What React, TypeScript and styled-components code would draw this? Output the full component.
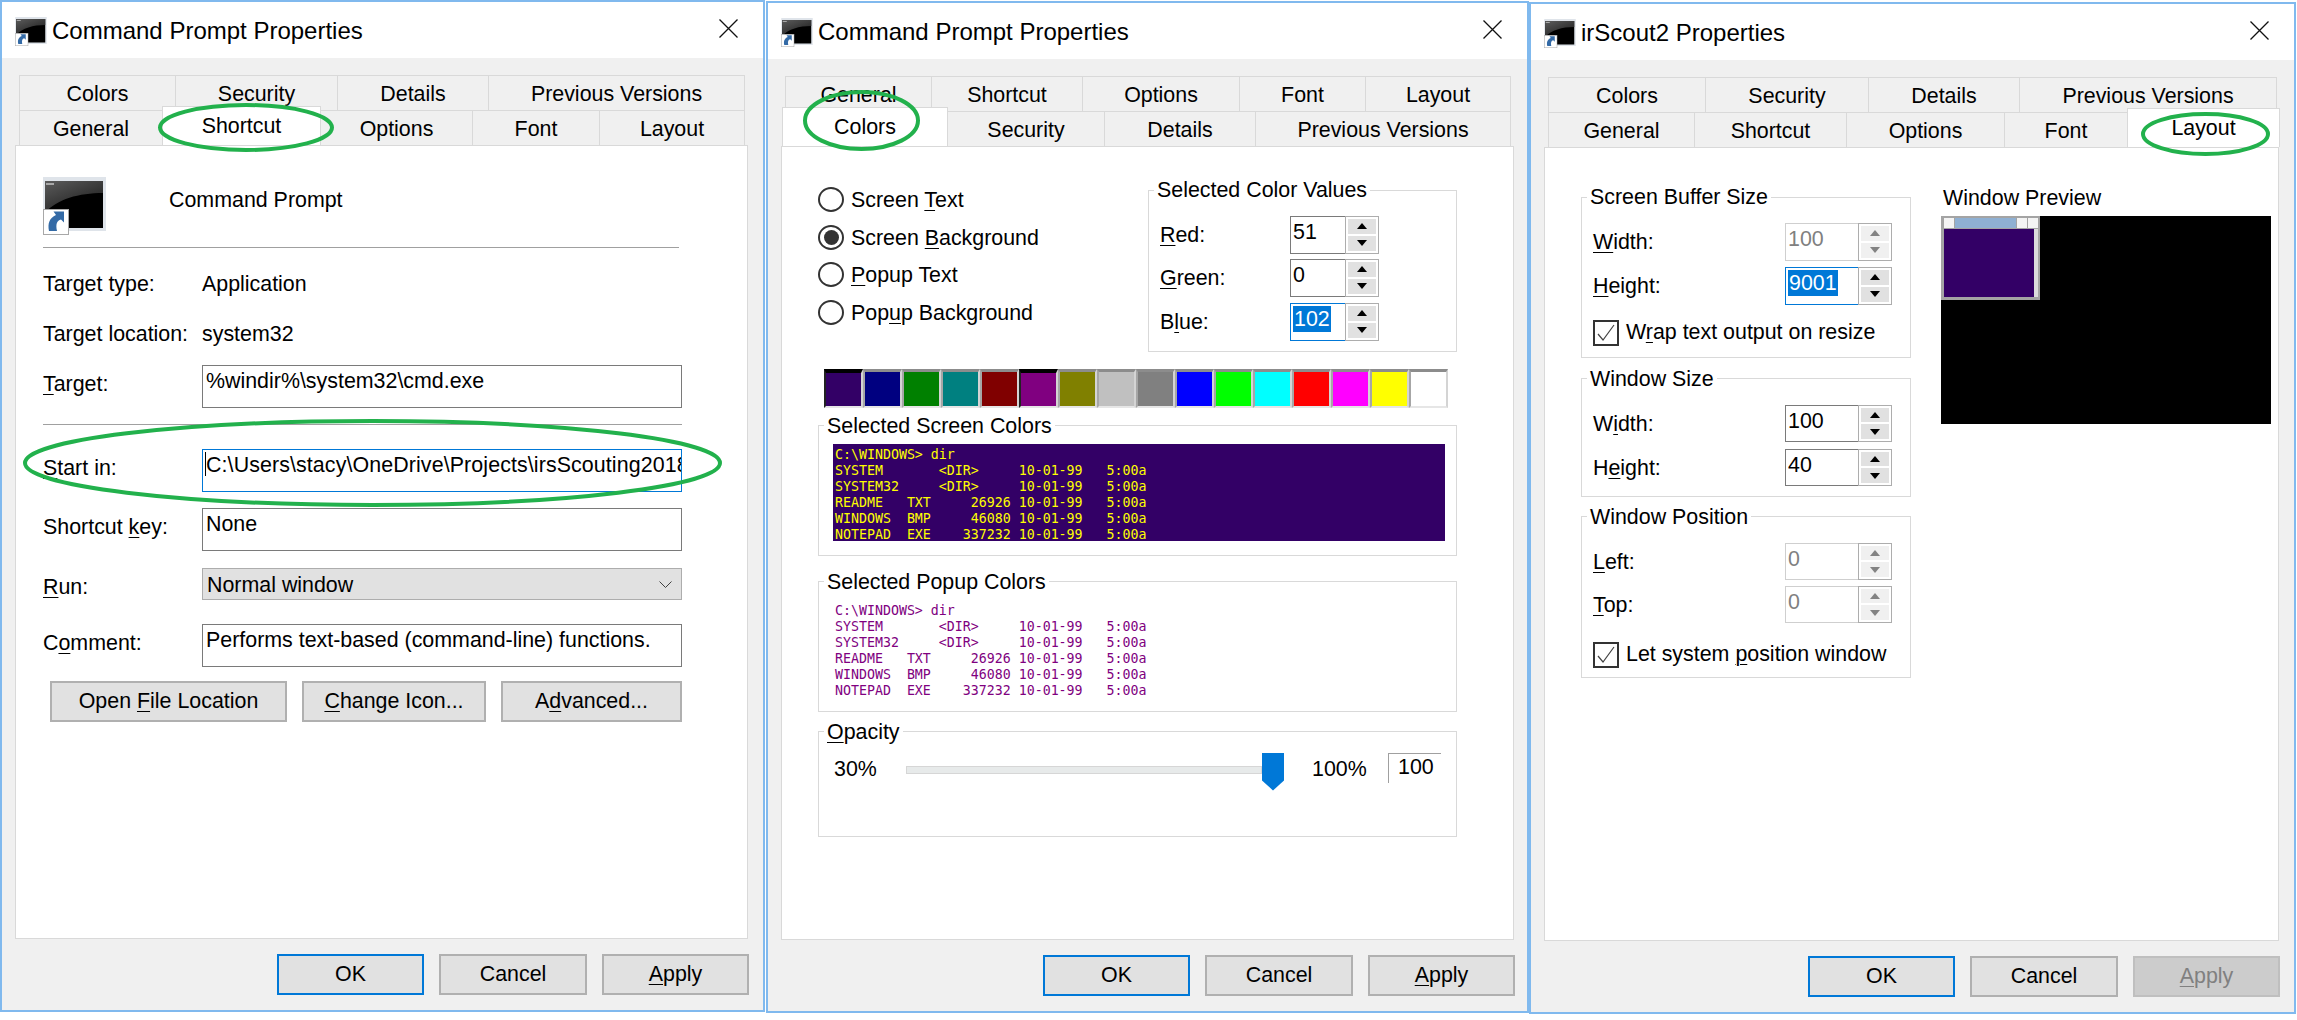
import React from "react";
import styled, { createGlobalStyle } from "styled-components";

const Global = createGlobalStyle`
  html, body { margin: 0; padding: 0; background: #fff; overflow: hidden; }
  body { font-family: "Liberation Sans", Arial, sans-serif; font-size: 21.4px; color: #000; }
  * { box-sizing: border-box; }
`;

const Desktop = styled.div`
  display: flex;
  align-items: flex-start;
  width: 2297px;
  height: 1020px;
  overflow: hidden;
`;
const Win = styled.section<{ $w: number; $top: number; $gap: number }>`
  position: relative;
  display: flex;
  flex-direction: column;
  flex: none;
  width: ${(p) => p.$w}px;
  height: 1012px;
  margin-top: ${(p) => p.$top}px;
  margin-right: ${(p) => p.$gap}px;
  border: 2px solid #80b9ee;
  background: #f0f0f0;
`;
const TitleBar = styled.header`
  display: flex;
  align-items: center;
  height: 56px;
  padding: 2px 25px 0 13px;
  background: #fff;
  flex: none;
`;
const TitleText = styled.h1`
  margin: 0 0 0 5px;
  font-size: 24px;
  font-weight: 400;
  flex: 1;
`;
const Close = styled.svg`
  width: 19px;
  height: 19px;
  margin-top: -5px;
`;
const Body = styled.div`
  display: flex;
  flex-direction: column;
  padding: 17px 0 0 13px;
  flex: 1;
`;
const TabRow = styled.div<{ $shift?: number }>`
  display: flex;
  height: 35px;
  margin-left: ${(p) => 4 + (p.$shift ?? 0)}px;
`;
const Tab = styled.div<{ $w: number; $active?: boolean }>`
  display: flex;
  align-items: center;
  justify-content: center;
  flex: none;
  width: ${(p) => p.$w}px;
  height: ${(p) => (p.$active ? 39 : 35)}px;
  margin-top: ${(p) => (p.$active ? -4 : 0)}px;
  padding-top: ${(p) => (p.$active ? 0 : 3)}px;
  border: 1px solid #d9d9d9;
  border-bottom: ${(p) => (p.$active ? "none" : "0")};
  margin-right: -1px;
  background: ${(p) => (p.$active ? "#fff" : "#f0f0f0")};
  position: relative;
  z-index: ${(p) => (p.$active ? 2 : 0)};
`;
const Panel = styled.main<{ $w: number }>`
  position: relative;
  width: ${(p) => p.$w}px;
  height: 794px;
  background: #fff;
  border: 1px solid #d9d9d9;
  flex: none;
  z-index: 1;
`;
const ButtonBar = styled.footer<{ $w: number }>`
  display: flex;
  justify-content: flex-end;
  gap: 15px;
  width: ${(p) => p.$w}px;
  margin-top: 15px;
`;
const DlgButton = styled.button<{ $w: number; $primary?: boolean }>`
  width: ${(p) => p.$w}px;
  height: 41px;
  padding: 0;
  font: inherit;
  color: ${(p) => (p.disabled ? "#808080" : "#000")};
  background: ${(p) => (p.disabled ? "#cccccc" : "#e1e1e1")};
  border: 2px solid ${(p) => (p.$primary ? "#0078d7" : p.disabled ? "#bfbfbf" : "#b0b0b0")};
`;
const Key = styled.span`
  text-decoration: underline;
  text-underline-offset: 3px;
  text-decoration-thickness: 1px;
`;
const Rings = styled.svg`
  position: absolute;
  left: -2px;
  top: -2px;
  width: 768px;
  height: 700px;
  pointer-events: none;
  z-index: 5;
  overflow: visible;
`;

/* shortcut tab */
const ShortcutForm = styled.div`
  padding: 31px 0 0 27px;
`;
const HeaderRow = styled.div`
  display: flex;
  align-items: flex-start;
  height: 58px;
`;
const AppName = styled.div`
  margin-left: 63px;
  line-height: 46px;
`;
const Rule = styled.hr<{ $w: number; $mt: number }>`
  width: ${(p) => p.$w}px;
  height: 1px;
  margin: ${(p) => p.$mt}px 0 0;
  border: 0;
  background: #a0a0a0;
`;
const InfoRow = styled.div<{ $mt: number }>`
  display: grid;
  grid-template-columns: 159px auto;
  height: 30px;
  line-height: 30px;
  margin-top: ${(p) => p.$mt}px;
`;
const FormRow = styled.div<{ $mt: number }>`
  display: grid;
  grid-template-columns: 159px 480px;
  align-items: center;
  margin-top: ${(p) => p.$mt}px;
`;
const FormLabel = styled.label<{ $low?: boolean }>`
  padding-bottom: ${(p) => (p.$low ? 0 : 5)}px;
  padding-top: ${(p) => (p.$low ? 7 : 0)}px;
`;
const TextBox = styled.div<{ $focus?: boolean }>`
  position: relative;
  height: 43px;
  padding: 1px 3px 0;
  line-height: 28px;
  letter-spacing: ${(p) => (p.$focus ? "0.1px" : "0")};
  border: 1px solid ${(p) => (p.$focus ? "#0078d7" : "#7a7a7a")};
  white-space: nowrap;
  overflow: hidden;
`;
const Caret = styled.i`
  position: absolute;
  left: 2px;
  top: 2px;
  width: 1px;
  height: 24px;
  background: #000;
`;
const Select = styled.div`
  display: flex;
  align-items: center;
  justify-content: space-between;
  height: 32px;
  padding: 2px 9px 0 4px;
  background: #e1e1e1;
  border: 1px solid #adadad;
`;
const ActionRow = styled.div`
  display: flex;
  margin: 14px 0 0 7px;
  gap: 15px;
`;

/* colors tab */
const TopSplit = styled.div`
  display: flex;
  padding: 31px 0 0 36px;
`;
const RadioColumn = styled.div`
  width: 330px;
  padding-top: 3px;
`;
const RadioRow = styled.label`
  display: flex;
  align-items: center;
  gap: 7px;
  height: 37.6px;
  & > span:last-child {
    padding-top: 2px;
  }
`;
const RadioDot = styled.span<{ $on?: boolean }>`
  display: flex;
  align-items: center;
  justify-content: center;
  width: 26px;
  height: 25px;
  border: 2px solid #333;
  border-radius: 50%;
  background: #fff;
  &::after {
    content: "";
    width: 15px;
    height: 15px;
    border-radius: 50%;
    background: ${(p) => (p.$on ? "#333" : "transparent")};
  }
`;
const Group = styled.fieldset<{ $w: number; $h: number; $mt?: number; $ml?: number }>`
  flex: none;
  width: ${(p) => p.$w}px;
  height: ${(p) => p.$h}px;
  margin: ${(p) => p.$mt ?? 0}px 0 0 ${(p) => p.$ml ?? 0}px;
  padding: 14px 0 0 11px;
  border: 1px solid #d9d9d9;
  min-width: 0;
`;
const GroupTitle = styled.legend`
  margin-left: -6px;
  padding: 0 3px;
  line-height: 24px;
`;
const SpinRow = styled.div<{ $col: number; $mt?: number }>`
  display: grid;
  grid-template-columns: ${(p) => p.$col}px auto;
  align-items: center;
  margin-top: ${(p) => p.$mt ?? 0}px;
  & > span {
    padding-top: 2px;
  }
`;
const Spinner = styled.div`
  display: flex;
  height: 37.5px;
  width: fit-content;
`;
const SpinField = styled.div<{ $w: number; $focus?: boolean; $off?: boolean }>`
  width: ${(p) => p.$w}px;
  padding: 2px 0 0 2px;
  line-height: 26px;
  border: 1px solid ${(p) => (p.$focus ? "#0078d7" : p.$off ? "#cfcfcf" : "#7a7a7a")};
  border-right: 0;
  color: ${(p) => (p.$off ? "#808080" : "#000")};
`;
const Highlight = styled.span`
  display: inline-block;
  background: #0078d7;
  color: #fff;
  padding: 0 1px;
`;
const SpinButtons = styled.div`
  display: flex;
  flex-direction: column;
  gap: 2px;
  width: 34px;
  padding: 2px;
  border: 1px solid #adadad;
  background: #fff;
`;
const SpinButton = styled.span<{ $off?: boolean }>`
  display: flex;
  align-items: center;
  justify-content: center;
  flex: 1;
  background: ${(p) => (p.$off ? "#f0f0f0" : "#e1e1e1")};
`;
const Arrow = styled.i<{ $down?: boolean; $off?: boolean }>`
  width: 0;
  height: 0;
  border-left: 5px solid transparent;
  border-right: 5px solid transparent;
  ${(p) => (p.$down ? "border-top" : "border-bottom")}: 6px solid ${(p) => (p.$off ? "#838383" : "#000")};
`;
const Swatches = styled.div`
  display: flex;
  margin: 17px 0 0 42px;
`;
const Swatch = styled.span<{ $c: string; $on?: boolean }>`
  width: 39px;
  height: 39px;
  background: ${(p) => p.$c};
  border-style: solid;
  border-width: ${(p) => (p.$on ? 4 : 3)}px 2px 2px 2px;
  border-color: ${(p) => (p.$on ? "#000" : "#8c8c8c")} #d4d4d4 #e6e6e6 ${(p) => (p.$on ? "#222" : "#a6a6a6")};
`;
const Console = styled.pre<{ $fg: string; $bg: string }>`
  width: 612px;
  height: 97px;
  margin: -8px 0 0 3px;
  padding: 3px 0 0 2px;
  overflow: hidden;
  font-family: "DejaVu Sans Mono", "Liberation Mono", monospace;
  font-size: 13.28px;
  line-height: 16px;
  color: ${(p) => p.$fg};
  background: ${(p) => p.$bg};
`;
const SliderRow = styled.div`
  display: flex;
  align-items: center;
  height: 38px;
  margin: -5px 0 0 4px;
`;
const SliderEnd = styled.span<{ $w: number; $ml?: number }>`
  width: ${(p) => p.$w}px;
  margin-left: ${(p) => p.$ml ?? 0}px;
  padding-bottom: 5px;
`;
const Track = styled.span`
  width: 356px;
  height: 8px;
  margin-bottom: 3px;
  background: #e7eaea;
  border: 1px solid #d6d6d6;
`;
const Thumb = styled.span`
  width: 22px;
  height: 38px;
  background: #0078d7;
  clip-path: polygon(0 0, 100% 0, 100% 74%, 50% 100%, 0 74%);
`;
const ValueBox = styled.span`
  align-self: flex-start;
  width: 53px;
  height: 30px;
  padding-left: 9px;
  line-height: 26px;
  border-top: 1px solid #a0a0a0;
  border-left: 1px solid #a0a0a0;
`;

/* layout tab */
const LayoutSplit = styled.div`
  display: flex;
  padding: 37px 0 0 36px;
`;
const LeftStack = styled.div`
  width: 330px;
  flex: none;
`;
const PreviewColumn = styled.div`
  margin-left: 30px;
`;
const PreviewTitle = styled.div`
  line-height: 24px;
  margin-top: 1px;
  padding-left: 2px;
`;
const Screen = styled.div`
  width: 330px;
  height: 208px;
  margin-top: 6px;
  background: #000;
`;
const MiniWindow = styled.div`
  width: 99px;
  height: 84px;
  padding: 2px 2px 3px 3px;
  background: #a4a4a4;
`;
const MiniTitle = styled.div`
  display: flex;
  gap: 1px;
  height: 10px;
`;
const MiniBox = styled.span`
  width: 10px;
  background: #f4f4f4;
`;
const MiniBar = styled.span`
  flex: 1;
  background: #8fb0d3;
`;
const MiniClient = styled.div`
  display: flex;
  height: 68px;
  margin-top: 1px;
`;
const MiniFill = styled.div`
  flex: 1;
  background: #330066;
`;
const MiniScroll = styled.div`
  width: 4px;
  background: #dcdcdc;
`;
const CheckRow = styled.label<{ $mt: number }>`
  display: flex;
  align-items: center;
  gap: 7px;
  margin-top: ${(p) => p.$mt}px;
`;
const CheckBox = styled.span`
  display: flex;
  width: 26px;
  height: 26px;
  border: 2px solid #333;
  background: #fff;
`;

const AppIcon = ({ w, h }: { w: number; h: number }) => (
  <svg width={w} height={h} viewBox="0 0 63 58" style={{ flex: "none" }}>
    <defs>
      <linearGradient id="cmdShine" x1="0" y1="0" x2="0.7" y2="1">
        <stop offset="0" stopColor="#5c5c5c" />
        <stop offset="1" stopColor="#1c1c1c" />
      </linearGradient>
    </defs>
    <rect x="0" y="0" width="63" height="54" fill="#dfe4ea" />
    <rect x="2" y="4" width="58" height="47" fill="#000" />
    <path d="M2 4h58v12C36 16 14 22 2 36z" fill="url(#cmdShine)" />
    <rect x="3" y="6" width="8" height="2" fill="#a8a8a8" />
    <rect x="0.5" y="32.5" width="25" height="25" fill="#fff" stroke="#a8a8a8" />
    <path d="M6 54c-1.500-8 .5-13 7-16l-2.500-3.500H21v11l-3-3c-4 1-5.500 4.500-4 11.500z" fill="#336aa6" />
  </svg>
);
const Chevron = () => (
  <svg width="13" height="8" viewBox="0 0 13 8">
    <path d="M.5.5l6 6 6-6" fill="none" stroke="#404040" />
  </svg>
);
const Tick = () => (
  <svg width="22" height="22" viewBox="0 0 22 22">
    <path d="M3 12l5 6L19 3" fill="none" stroke="#444" strokeWidth="1.2" />
  </svg>
);

type TabSpec = [string, number, boolean?];
const Window = ({
  title, w, top, gap, rowA, rowB, shift, panelW, applyOff, rings, children,
}: {
  title: string; w: number; top: number; gap: number; rowA: TabSpec[]; rowB: TabSpec[];
  shift?: number; panelW: number; applyOff?: boolean;
  rings: [number, number, number, number][]; children: React.ReactNode;
}) => (
  <Win $w={w} $top={top} $gap={gap}>
    <TitleBar>
      <AppIcon w={32} h={29} />
      <TitleText>{title}</TitleText>
      <Close viewBox="0 0 19 19">
        <path d="M.5.5l18 18M18.5.5l-18 18" stroke="#111" strokeWidth="1.3" fill="none" />
      </Close>
    </TitleBar>
    <Body>
      <TabRow>
        {rowA.map(([t, tw]) => <Tab key={t} $w={tw}>{t}</Tab>)}
      </TabRow>
      <TabRow $shift={shift}>
        {rowB.map(([t, tw, a]) => <Tab key={t} $w={tw} $active={a}>{t}</Tab>)}
      </TabRow>
      <Panel $w={panelW}>{children}</Panel>
      <ButtonBar $w={panelW + 1}>
        <DlgButton $w={147} $primary>OK</DlgButton>
        <DlgButton $w={148}>Cancel</DlgButton>
        <DlgButton $w={147} disabled={applyOff}><Key>A</Key>pply</DlgButton>
      </ButtonBar>
    </Body>
    <Rings>
      {rings.map(([x1, x2, y1, y2]) => (
        <ellipse key={x1 + "-" + y1} cx={(x1 + x2) / 2} cy={(y1 + y2) / 2} rx={(x2 - x1) / 2 - 2} ry={(y2 - y1) / 2 - 2}
          fill="none" stroke="#22b14c" strokeWidth="4" />
      ))}
    </Rings>
  </Win>
);

const Spin = ({ value, w, focus, off, selected }: { value: string; w: number; focus?: boolean; off?: boolean; selected?: boolean }) => (
  <Spinner>
    <SpinField $w={w} $focus={focus} $off={off}>
      {selected ? <Highlight>{value}</Highlight> : value}
    </SpinField>
    <SpinButtons>
      <SpinButton $off={off}><Arrow $off={off} /></SpinButton>
      <SpinButton $off={off}><Arrow $down $off={off} /></SpinButton>
    </SpinButtons>
  </Spinner>
);

const DIR = `C:\\WINDOWS> dir
SYSTEM       <DIR>     10-01-99   5:00a
SYSTEM32     <DIR>     10-01-99   5:00a
README   TXT     26926 10-01-99   5:00a
WINDOWS  BMP     46080 10-01-99   5:00a
NOTEPAD  EXE    337232 10-01-99   5:00a`;

const SWATCHES = ["#330066", "#000080", "#008000", "#008080", "#800000", "#800080", "#808000", "#c0c0c0", "#808080", "#0000ff", "#00ff00", "#00ffff", "#ff0000", "#ff00ff", "#ffff00", "#ffffff"];

export default function App() {
  return (
    <Desktop>
      <Global />
      <Window
        title="Command Prompt Properties" w={765} top={0} gap={1} panelW={733}
        rowA={[["Colors", 157], ["Security", 163], ["Details", 152], ["Previous Versions", 257]]}
        rowB={[["General", 144], ["Shortcut", 159, true], ["Options", 153], ["Font", 128], ["Layout", 146]]}
        rings={[[158, 334, 103, 152], [23, 722, 419, 507]]}
      >
        <ShortcutForm>
          <HeaderRow>
            <AppIcon w={63} h={58} />
            <AppName>Command Prompt</AppName>
          </HeaderRow>
          <Rule $w={636} $mt={12} />
          <InfoRow $mt={21}><span>Target type:</span><span>Application</span></InfoRow>
          <InfoRow $mt={20}><span>Target location:</span><span>system32</span></InfoRow>
          <FormRow $mt={16}>
            <FormLabel><Key>T</Key>arget:</FormLabel>
            <TextBox>%windir%\system32\cmd.exe</TextBox>
          </FormRow>
          <Rule $w={639} $mt={16} />
          <FormRow $mt={24}>
            <FormLabel><Key>S</Key>tart in:</FormLabel>
            <TextBox $focus><Caret />C:\Users\stacy\OneDrive\Projects\irsScouting2018</TextBox>
          </FormRow>
          <FormRow $mt={16}>
            <FormLabel>Shortcut <Key>k</Key>ey:</FormLabel>
            <TextBox>None</TextBox>
          </FormRow>
          <FormRow $mt={17}>
            <FormLabel $low><Key>R</Key>un:</FormLabel>
            <Select>Normal window<Chevron /></Select>
          </FormRow>
          <FormRow $mt={24}>
            <FormLabel>C<Key>o</Key>mment:</FormLabel>
            <TextBox>Performs text-based (command-line) functions.</TextBox>
          </FormRow>
          <ActionRow>
            <DlgButton $w={237}>Open <Key>F</Key>ile Location</DlgButton>
            <DlgButton $w={184}><Key>C</Key>hange Icon...</DlgButton>
            <DlgButton $w={181}>A<Key>d</Key>vanced...</DlgButton>
          </ActionRow>
        </ShortcutForm>
      </Window>

      <Window
        title="Command Prompt Properties" w={763} top={1} gap={0} panelW={733} shift={-3}
        rowA={[["General", 147], ["Shortcut", 152], ["Options", 158], ["Font", 127], ["Layout", 146]]}
        rowB={[["Colors", 166, true], ["Security", 158], ["Details", 152], ["Previous Versions", 256]]}
        rings={[[37, 154, 89, 150]]}
      >
        <TopSplit>
          <RadioColumn>
            <RadioRow><RadioDot /><span>Screen <Key>T</Key>ext</span></RadioRow>
            <RadioRow><RadioDot $on /><span>Screen <Key>B</Key>ackground</span></RadioRow>
            <RadioRow><RadioDot /><span><Key>P</Key>opup Text</span></RadioRow>
            <RadioRow><RadioDot /><span>Pop<Key>u</Key>p Background</span></RadioRow>
          </RadioColumn>
          <Group $w={309} $h={174}>
            <GroupTitle>Selected Color Values</GroupTitle>
            <SpinRow $col={130}><span><Key>R</Key>ed:</span><Spin value="51" w={55} /></SpinRow>
            <SpinRow $col={130} $mt={5.5}><span><Key>G</Key>reen:</span><Spin value="0" w={55} /></SpinRow>
            <SpinRow $col={130} $mt={6.5}><span>B<Key>l</Key>ue:</span><Spin value="102" w={55} focus selected /></SpinRow>
          </Group>
        </TopSplit>
        <Swatches>
          {SWATCHES.map((c, i) => <Swatch key={c} $c={c} $on={i === 0 || i === 5} />)}
        </Swatches>
        <Group $w={639} $h={142} $mt={5.5} $ml={36}>
          <GroupTitle>Selected Screen Colors</GroupTitle>
          <Console $fg="#ffff00" $bg="#330066">{DIR}</Console>
        </Group>
        <Group $w={639} $h={142} $mt={14} $ml={36}>
          <GroupTitle>Selected Popup Colors</GroupTitle>
          <Console $fg="#800080" $bg="#ffffff">{DIR}</Console>
        </Group>
        <Group $w={639} $h={117} $mt={8} $ml={36}>
          <GroupTitle><Key>O</Key>pacity</GroupTitle>
          <SliderRow>
            <SliderEnd $w={72}>30%</SliderEnd>
            <Track />
            <Thumb />
            <SliderEnd $w={76} $ml={28}>100%</SliderEnd>
            <ValueBox>100</ValueBox>
          </SliderRow>
        </Group>
      </Window>

      <Window
        title="irScout2 Properties" w={767} top={2} gap={0} panelW={735} applyOff
        rowA={[["Colors", 158], ["Security", 164], ["Details", 152], ["Previous Versions", 258]]}
        rowB={[["General", 147], ["Shortcut", 153], ["Options", 159], ["Font", 124], ["Layout", 153, true]]}
        rings={[[612, 741, 110, 154]]}
      >
        <LayoutSplit>
          <LeftStack>
            <Group $w={330} $h={173}>
              <GroupTitle>Screen Buffer Size</GroupTitle>
              <SpinRow $col={192}><span><Key>W</Key>idth:</span><Spin value="100" w={73} off /></SpinRow>
              <SpinRow $col={192} $mt={6.5}><span><Key>H</Key>eight:</span><Spin value="9001" w={73} focus selected /></SpinRow>
              <CheckRow $mt={15}><CheckBox><Tick /></CheckBox><span>W<Key>r</Key>ap text output on resize</span></CheckRow>
            </Group>
            <Group $w={330} $h={130} $mt={8.5}>
              <GroupTitle>Window Size</GroupTitle>
              <SpinRow $col={192}><span>W<Key>i</Key>dth:</span><Spin value="100" w={73} /></SpinRow>
              <SpinRow $col={192} $mt={6.5}><span>H<Key>e</Key>ight:</span><Spin value="40" w={73} /></SpinRow>
            </Group>
            <Group $w={330} $h={173} $mt={8}>
              <GroupTitle>Window Position</GroupTitle>
              <SpinRow $col={192}><span><Key>L</Key>eft:</span><Spin value="0" w={73} off /></SpinRow>
              <SpinRow $col={192} $mt={5.5}><span><Key>T</Key>op:</span><Spin value="0" w={73} off /></SpinRow>
              <CheckRow $mt={18.5}><CheckBox><Tick /></CheckBox><span>Let system <Key>p</Key>osition window</span></CheckRow>
            </Group>
          </LeftStack>
          <PreviewColumn>
            <PreviewTitle>Window Preview</PreviewTitle>
            <Screen>
              <MiniWindow>
                <MiniTitle><MiniBox /><MiniBar /><MiniBox /><MiniBox /></MiniTitle>
                <MiniClient><MiniFill /><MiniScroll /></MiniClient>
              </MiniWindow>
            </Screen>
          </PreviewColumn>
        </LayoutSplit>
      </Window>
    </Desktop>
  );
}
